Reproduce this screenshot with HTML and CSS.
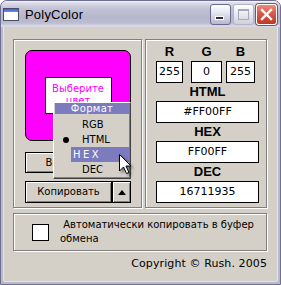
FILE: index.html
```html
<!DOCTYPE html>
<html>
<head>
<meta charset="utf-8">
<link rel="stylesheet" href="styles.css">
</head>
<body>
<div class="window">
  <div class="titlebar">
    <span class="app-icon"></span>
    <span class="title">PolyColor</span>
    <div class="tb-buttons">
      <span class="tb-btn tb-min"><span class="min-bar"></span></span>
      <span class="tb-btn tb-max"><span class="max-box"></span></span>
      <span class="tb-btn tb-close">
        <svg width="13" height="13" viewBox="0 0 13 13"><path d="M2 2 L11 11 M11 2 L2 11" stroke="#fff" stroke-width="2.4" stroke-linecap="square"/></svg>
      </span>
    </div>
  </div>
  <div class="client">
    <div class="groups">
      <div class="group group-left">
        <div class="swatch">
          <div class="swatch-label">Выберите<br>цвет</div>
        </div>
        <div class="btn btn-pick">Выбрать цвет</div>
        <div class="btn-row">
          <div class="btn btn-copy">Копировать</div>
          <div class="btn btn-arrow"><span class="tri"></span></div>
        </div>
      </div>
      <div class="group group-right">
        <div class="rgb">
          <div class="rgb-col col-r"><div class="rgb-label">R</div><div class="field">255</div></div>
          <div class="rgb-col col-g"><div class="rgb-label">G</div><div class="field">0</div></div>
          <div class="rgb-col col-b"><div class="rgb-label">B</div><div class="field">255</div></div>
        </div>
        <div class="label">HTML</div>
        <div class="field wide">#FF00FF</div>
        <div class="label">HEX</div>
        <div class="field wide">FF00FF</div>
        <div class="label">DEC</div>
        <div class="field wide">16711935</div>
      </div>
    </div>
    <div class="group group-check">
      <span class="checkbox"></span>
      <span class="check-text">&nbsp;Автоматически копировать в буфер обмена</span>
    </div>
    <div class="copyright">Copyright © Rush. 2005</div>
  </div>

  <div class="menu">
    <div class="menu-header">Формат</div>
    <div class="menu-items">
      <div class="menu-item"><span class="item-text">RGB</span></div>
      <div class="menu-item"><span class="bullet"></span><span class="item-text">HTML</span></div>
      <div class="menu-item"><span class="item-text hl">HEX</span></div>
      <div class="menu-item"><span class="item-text">DEC</span></div>
    </div>
  </div>

  <svg class="cursor" width="16" height="24" viewBox="0 0 16 24">
    <polygon points="0.5,0.5 0.5,17 4.5,13 7.5,19.5 10,18.5 7,12 12,12" fill="#fff" stroke="#000" stroke-width="1" stroke-linejoin="miter"/>
  </svg>
</div>
</body>
</html>
```
FILE: styles.css
```css
* { box-sizing: border-box; }

body {
  margin: 0;
  background: #ffffff;
  font-family: "DejaVu Sans", sans-serif;
}

.window {
  position: relative;
  width: 281px;
  height: 285px;
  display: flex;
  flex-direction: column;
  background: #b9b9cd;
  border: 1px solid #6f6f93;
  border-radius: 7px 7px 0 0;
  overflow: hidden;
}

/* ---------- title bar ---------- */
.titlebar {
  height: 26px;
  flex: none;
  display: flex;
  align-items: center;
  padding-left: 2px;
  background: linear-gradient(#f6f6fa 0, #dcdce8 2px, #c4c4d8 7px, #b6b6cc 16px, #bcbcd0 22px, #d8d8e6 25px);
}

.app-icon {
  width: 16px;
  height: 13px;
  margin-top: 1px;
  background: linear-gradient(#3a62d0 0, #6a8ee8 3px, #ffffff 3px);
  border: 1px solid #4a4a6a;
}

.title {
  margin-left: 6px;
  font-family: "Liberation Sans", sans-serif;
  font-size: 13px;
  color: #000;
  letter-spacing: 0.2px;
}

.tb-buttons {
  margin-left: auto;
  margin-right: 3px;
  display: flex;
  gap: 2px;
}

.tb-btn {
  width: 21px;
  height: 21px;
  border-radius: 3px;
  display: flex;
  align-items: center;
  justify-content: center;
  position: relative;
}

.tb-min {
  background: linear-gradient(#ffffff, #e6e6ee 40%, #b8b8cc);
  border: 1px solid #6a6a92;
}

.min-bar {
  position: absolute;
  left: 4px;
  bottom: 4px;
  width: 9px;
  height: 4px;
  background: #2c2c44;
  border: 1px solid #ffffff;
}

.tb-max {
  background: linear-gradient(#ffffff, #ececf2 40%, #d0d0dc);
  border: 1px solid #b4b4c8;
}

.max-box {
  width: 11px;
  height: 11px;
  border: 1px solid #a8a8bc;
  border-top-width: 2px;
  margin-top: 1px;
}

.tb-close {
  background: linear-gradient(#ec8c7c, #d85848 45%, #c03828);
  border: 1px solid #ffffff;
  box-shadow: 0 0 0 1px #a04848;
}

/* ---------- client area ---------- */
.client {
  flex: 1;
  margin: 0 3px 3px;
  background: #d4d0c8;
  padding: 12px 9px 0;
  display: flex;
  flex-direction: column;
  box-shadow: -1px 0 0 #e4e4ee, 1px 0 0 #e4e4ee, 0 1px 0 #e4e4ee;
}

.groups {
  display: flex;
  gap: 3px;
}

.group {
  border: 1px solid #808080;
  box-shadow: inset 1px 1px 0 #ffffff, 1px 1px 0 #ffffff;
}

.group-left {
  width: 129px;
  height: 169px;
  padding: 10px 0 0 11px;
}

.group-right {
  width: 122px;
  height: 169px;
  padding: 0 0 0 10px;
}

/* swatch */
.swatch {
  width: 106px;
  height: 91px;
  background: #ff00ff;
  border: 1px solid #000;
  border-radius: 7px;
  display: flex;
  align-items: center;
  justify-content: center;
}

.swatch-label {
  width: 67px;
  height: 37px;
  background: #fff;
  border: 1px solid #000;
  color: #ff00ff;
  font-size: 10px;
  line-height: 12px;
  text-align: center;
  padding-top: 5px;
}

/* buttons */
.btn {
  background: #d4d0c8;
  border: 1px solid #000;
  box-shadow: inset 1px 1px 0 #ffffff, inset -1px -1px 0 #808080;
  font-size: 10px;
  color: #000;
  display: flex;
  align-items: center;
  justify-content: center;
  white-space: nowrap;
}

.btn-pick {
  width: 106px;
  height: 21px;
  margin-top: 11px;
  padding-left: 8px;
}

.btn-row {
  display: flex;
  margin-top: 8px;
}

.btn-copy {
  width: 87px;
  height: 22px;
  padding-bottom: 1px;
}

.btn-arrow {
  width: 19px;
  height: 22px;
}

.tri {
  width: 0;
  height: 0;
  border-left: 4.5px solid transparent;
  border-right: 4.5px solid transparent;
  border-bottom: 5px solid #000;
}

/* right group */
.rgb {
  display: flex;
}

.col-r { width: 27px; }
.col-g { width: 31px; margin-left: 8px; }
.col-b { width: 29px; margin-left: 4px; }

.rgb-label {
  height: 21px;
  padding-top: 4px;
  line-height: 15px;
  text-align: center;
  font-family: "Liberation Sans", sans-serif;
  font-weight: bold;
  font-size: 13px;
}

.field {
  height: 22px;
  background: #fff;
  border: 1px solid #000;
  font-size: 11px;
  line-height: 20px;
  text-align: center;
  color: #000;
}

.field.wide {
  width: 103px;
}

.label {
  width: 103px;
  height: 18px;
  line-height: 18px;
  text-align: center;
  font-family: "Liberation Sans", sans-serif;
  font-weight: bold;
  font-size: 13px;
}

/* check group */
.group-check {
  margin-top: 5px;
  width: 254px;
  height: 38px;
  display: flex;
  align-items: center;
  padding-left: 18px;
}

.checkbox {
  flex: none;
  width: 17px;
  height: 17px;
  background: #fff;
  border: 1px solid #000;
}

.check-text {
  margin-left: 11px;
  width: 195px;
  font-size: 10px;
  line-height: 14px;
  color: #000;
}

.copyright {
  width: 254px;
  margin-top: 6px;
  text-align: right;
  font-size: 11px;
  line-height: 14px;
  color: #000;
  letter-spacing: 0.1px;
}

/* ---------- popup menu ---------- */
.menu {
  position: absolute;
  left: 52px;
  top: 101px;
  width: 78px;
  height: 77px;
  background: #d4d0c8;
  border: 1px solid;
  border-color: #ffffff #404040 #404040 #ffffff;
  box-shadow: inset -1px -1px 0 #808080, inset 1px 1px 0 #d4d0c8;
  padding: 0 1px 0 1px;
}

.menu-header {
  height: 11px;
  background: #7b7bbd;
  color: #fff;
  font-size: 10px;
  line-height: 11px;
  text-align: center;
  letter-spacing: 0.3px;
}

.menu-items {
  margin-top: 3px;
}

.menu-item {
  position: relative;
  height: 15px;
}

.bullet {
  position: absolute;
  left: 8px;
  top: 5px;
  width: 6px;
  height: 6px;
  border-radius: 50%;
  background: #000;
}

.item-text {
  display: block;
  margin-left: 16px;
  width: 58px;
  height: 15px;
  padding-left: 11px;
  font-size: 10px;
  line-height: 15px;
  color: #000;
}

.item-text.hl {
  background: #7b7bbd;
  color: #fff;
  padding-left: 2px;
  letter-spacing: 2.5px;
}

.cursor {
  position: absolute;
  left: 118px;
  top: 153px;
  filter: drop-shadow(2px 2px 1.5px rgba(0, 0, 0, 0.45));
}
```
